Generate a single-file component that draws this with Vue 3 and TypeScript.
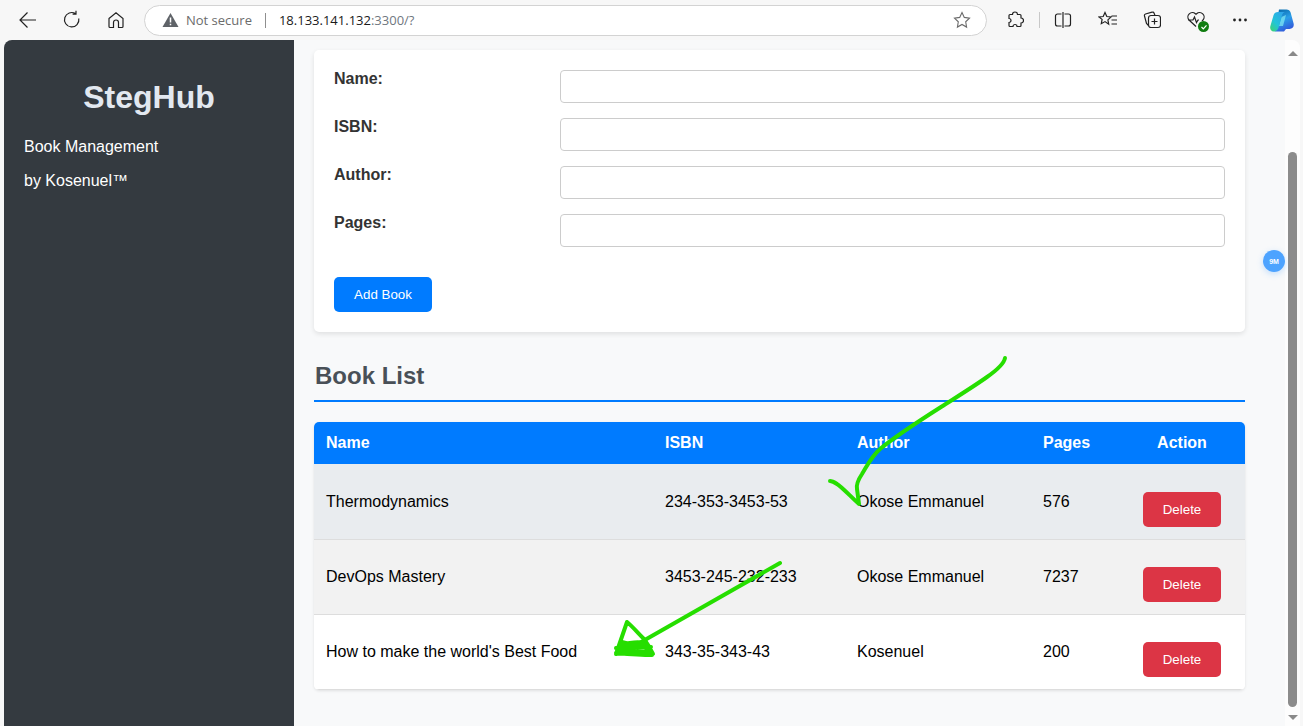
<script setup lang="ts">
interface Book {
  name: string;
  isbn: string;
  author: string;
  pages: number;
}

const fields = ['Name:', 'ISBN:', 'Author:', 'Pages:'];

const books: Book[] = [
  { name: 'Thermodynamics', isbn: '234-353-3453-53', author: 'Okose Emmanuel', pages: 576 },
  { name: 'DevOps Mastery', isbn: '3453-245-232-233', author: 'Okose Emmanuel', pages: 7237 },
  { name: "How to make the world's Best Food", isbn: '343-35-343-43', author: 'Kosenuel', pages: 200 },
];
</script>

<template>
  <div class="browser">
    <header class="toolbar">
      <svg class="tool back" width="20" height="20" viewBox="0 0 20 20"><path d="M18 10H2M9.5 2.500 2 10l7.5 7.500" /></svg>
      <svg class="tool reload" width="20" height="20" viewBox="0 0 20 20"><path d="M16.800 8.500A7.200 7.200 0 1 1 13.500 3.600M14 .8v3.400h-3.400" /></svg>
      <svg class="tool home" width="20" height="20" viewBox="0 0 20 20"><path d="M3 8.500 10 2.800l7 5.700v8a1 1 0 0 1-1 1h-3.500v-5a2.500 2.500 0 0 0-5 0v5H4a1 1 0 0 1-1-1z" /></svg>

      <div class="address">
        <svg width="17" height="16" viewBox="0 0 17 16"><path d="M8.500 1 16.500 15H.5z" fill="#5f6368" /><path d="M8.500 5.500v5M8.500 11.700v1.600" stroke="#fff" stroke-width="1.500" /></svg>
        <span class="insecure">Not secure</span>
        <span class="divider"></span>
        <span class="url">18.133.141.132<span class="url-rest">:3300/?</span></span>
        <svg class="star" width="18" height="18" viewBox="0 0 18 18"><path d="m9 1.500 2.300 4.900 5.200.7-3.800 3.700.9 5.300L9 13.500l-4.600 2.600.9-5.300L1.500 7.100l5.200-.7z" /></svg>
      </div>

      <svg class="tool ext" width="18" height="18" viewBox="0 0 18 18"><path d="M6.500 3.500a2.500 2.500 0 0 1 5 0h2.500a1 1 0 0 1 1 1V7a2.500 2.500 0 0 1 0 5v2.500a1 1 0 0 1-1 1h-3a2 2 0 0 0-4 0H4a1 1 0 0 1-1-1v-3a2 2 0 0 0 0-4v-3a1 1 0 0 1 1-1z" /></svg>
      <span class="tool-sep"></span>
      <svg class="tool split" width="18" height="18" viewBox="0 0 18 18"><path d="M7.500 3H3.500a2 2 0 0 0-2 2v8a2 2 0 0 0 2 2h4M10.500 3h4a2 2 0 0 1 2 2v8a2 2 0 0 1-2 2h-4M9 1v16" /></svg>
      <svg class="tool favs" width="20" height="18" viewBox="0 0 20 18"><path d="m7 1.500 1.800 4 4.200.5-3.100 2.900.8 4.300L7 10.600l-3.700 2.100.8-4.300L1 6l4.200-.5zM13.500 5H19M13.500 9H19M13.500 13H19" /></svg>
      <svg class="tool coll" width="18" height="18" viewBox="0 0 18 18"><rect x="5.500" y="4.500" width="12" height="12" rx="2.500" /><path d="M11.500 7.500v6M8.500 10.500h6M12 4.500 11 2a1.500 1.500 0 0 0-2-.8L2.500 3a1.500 1.500 0 0 0-1 2l2 7.500 2 2" /></svg>
      <div class="health">
        <svg class="tool" width="20" height="18" viewBox="0 0 20 18"><path d="M10 15.500 3 9a4.500 4.500 0 0 1 6.400-6.300l.6.600.6-.6A4.500 4.500 0 0 1 17 9l-1 1M2 9h5l1.500-3 2 5.500L12 9h1" /></svg>
        <span class="health-dot"><svg width="8" height="8" viewBox="0 0 8 8"><path d="m1.500 4 1.800 1.800 3.200-3.500" /></svg></span>
      </div>
      <svg class="dots" width="14" height="4" viewBox="0 0 14 4"><circle cx="1.500" cy="2" r="1.400" /><circle cx="7" cy="2" r="1.400" /><circle cx="12.500" cy="2" r="1.400" /></svg>
      <svg class="copilot" width="24" height="23" viewBox="0 0 24 23">
        <defs>
          <linearGradient id="cop1" x1="0.3" y1="0" x2="0.7" y2="1"><stop offset="0" stop-color="#0b6fb0" /><stop offset=".45" stop-color="#2a9fe8" /><stop offset="1" stop-color="#3350d8" /></linearGradient>
          <linearGradient id="cop2" x1="0" y1="1" x2="0.8" y2="0"><stop offset="0" stop-color="#3fd46a" /><stop offset=".45" stop-color="#22c4d8" /><stop offset="1" stop-color="#2fa4ea" /></linearGradient>
        </defs>
        <path d="M9 .5h7.500c2 0 3.500 1.300 4.100 3l3 11c.8 3-1.100 5.500-4.100 5.500H16l-2 2.500H5z" fill="url(#cop1)" />
        <path d="M11.500 8 16 6l-3 11H9z" fill="#7fe6f2" opacity=".75" />
        <path d="M8 3h7c-2.500.5-3 3-3.500 5L9 17c-.7 3-2.200 5.500-5.200 5.500C1 22.500-.4 19.800.4 17L3.600 6C4.200 4 5.800 3 8 3z" fill="url(#cop2)" />
      </svg>
    </header>

    <div class="viewport">
      <aside class="sidebar">
        <h1>StegHub</h1>
        <p>Book Management</p>
        <p>by Kosenuel™</p>
      </aside>

      <main class="content">
        <form class="card" @submit.prevent>
          <div v-for="field in fields" :key="field" class="form-row">
            <label>{{ field }}</label>
            <input type="text" />
          </div>
          <button class="add-btn" type="button">Add Book</button>
        </form>

        <h2>Book List</h2>

        <div class="table-wrap">
          <table>
            <colgroup>
              <col style="width: 339px" />
              <col style="width: 192px" />
              <col style="width: 186px" />
              <col style="width: 88px" />
              <col style="width: 126px" />
            </colgroup>
            <thead>
              <tr>
                <th>Name</th>
                <th>ISBN</th>
                <th>Author</th>
                <th>Pages</th>
                <th class="center">Action</th>
              </tr>
            </thead>
            <tbody>
              <tr v-for="book in books" :key="book.isbn">
                <td>{{ book.name }}</td>
                <td>{{ book.isbn }}</td>
                <td>{{ book.author }}</td>
                <td>{{ book.pages }}</td>
                <td class="center"><button class="delete-btn" type="button">Delete</button></td>
              </tr>
            </tbody>
          </table>
        </div>
      </main>

      <div class="scrollbar">
        <span class="arrow up"></span>
        <span class="thumb"></span>
        <span class="arrow down"></span>
      </div>

      <!-- floating badge and the hand drawn marks sit on top of the page -->
      <span class="badge">9M</span>
      <svg class="scribble" width="1303" height="686" viewBox="0 40 1303 686">
        <path d="M1005 358c-1 6-8 12-18 19-14 10-32 21-46 30-22 14-44 28-61 42-9 8-13 17-18 25-4 6-6 10-5 15l2 15c-8-7-17-17-22-20-3-2-5-3-7-3" />
        <path d="M780 563 636 645" />
        <path d="M627 622 616 654M627 622c4 3 12 12 17 17 3 4 7 11 9 15M616 648c10-2 24-3 35-1M616 654c12-3 26-4 36-1M618 651c10-3 20-6 30-3M620 645c8-2 16-4 24-2M622 642 640 647M616 653c12 1 24 2 36 2" />
      </svg>
    </div>
  </div>
</template>

<style>
html,
body {
  margin: 0;
  overflow: hidden;
}
</style>

<style scoped>
.browser {
  width: 1303px;
  height: 726px;
  overflow: hidden;
  display: flex;
  flex-direction: column;
  background: #f7f7f7;
  font-family: "Liberation Sans", Arial, sans-serif;
}

.toolbar {
  height: 40px;
  flex: none;
  box-sizing: border-box;
  display: flex;
  align-items: center;
  padding: 0 0 0 18px;
}

.tool {
  flex: none;
  fill: none;
  stroke: #222;
  stroke-width: 1.2;
}

.reload {
  margin-left: 24px;
}

.home {
  margin-left: 24px;
}

.address {
  width: 843px;
  height: 31px;
  flex: none;
  box-sizing: border-box;
  margin-left: 18px;
  display: flex;
  align-items: center;
  padding: 0 15px 0 17px;
  background: #fff;
  border: 1px solid #d3d3d3;
  border-radius: 16px;
  font-family: "Open Sans", "Noto Sans", sans-serif;
  font-size: 13px;
}

.insecure {
  margin-left: 7px;
  color: #6b6b6b;
}

.divider {
  width: 1px;
  height: 15px;
  margin: 0 13px 0 13px;
  background: #8f8f8f;
}

.url {
  color: #1a1a1a;
}

.url-rest {
  color: #6f7780;
}

.star {
  margin-left: auto;
  fill: none;
  stroke: #6b6b6b;
  stroke-width: 1.1;
}

.ext {
  margin-left: 19px;
}

.tool-sep {
  width: 1px;
  height: 16px;
  margin: 0 14px 0 15px;
  background: #c8c8c8;
}

.favs {
  margin-left: 26px;
}

.coll {
  margin-left: 25px;
}

.health {
  position: relative;
  display: flex;
  margin-left: 25px;
}

.health-dot {
  position: absolute;
  right: -3px;
  bottom: -3px;
  width: 11px;
  height: 11px;
  display: flex;
  align-items: center;
  justify-content: center;
  background: #107c10;
  border-radius: 50%;
}

.health-dot path {
  fill: none;
  stroke: #fff;
  stroke-width: 1.2;
}

.dots {
  margin-left: 27px;
  flex: none;
  fill: #222;
}

.copilot {
  margin-left: 23px;
  flex: none;
}

.viewport {
  position: relative;
  flex: 1;
  min-height: 0;
  margin: 0 3px 0 4px;
  display: flex;
  overflow: hidden;
  background: #f8f9fa;
  border-top-left-radius: 8px;
  border-top-right-radius: 8px;
}

.sidebar {
  width: 290px;
  flex: none;
  box-sizing: border-box;
  padding: 39px 20px 0;
  background: #343a40;
  color: #fff;
}

.sidebar h1 {
  margin: 0 0 14px;
  font-size: 32px;
  line-height: 37px;
  font-weight: 700;
  text-align: center;
  color: #e2e8f0;
}

.sidebar p {
  margin: 0;
  font-size: 16px;
  line-height: 34px;
}

.content {
  flex: 1;
  min-width: 0;
  padding: 10px 40px 0 20px;
  color: #000;
}

.card {
  height: 282px;
  box-sizing: border-box;
  padding: 20px;
  background: #fff;
  border-radius: 5px;
  box-shadow: 0 2px 5px rgba(0, 0, 0, 0.1);
}

.form-row {
  display: flex;
  align-items: flex-start;
  margin-bottom: 15px;
}

.form-row label {
  width: 226px;
  flex: none;
  font-size: 16px;
  line-height: 18px;
  font-weight: 700;
  color: #333;
}

.form-row input {
  flex: 1;
  min-width: 0;
  height: 33px;
  box-sizing: border-box;
  background: #fff;
  border: 1px solid #ccc;
  border-radius: 4px;
}

.add-btn {
  display: block;
  width: 98px;
  height: 35px;
  margin-top: 30px;
  padding: 0;
  background: #007bff;
  color: #fff;
  border: none;
  border-radius: 5px;
  font-family: inherit;
  font-size: 13.333px;
}

h2 {
  margin: 30px 0 20px;
  padding: 0 0 10px 1px;
  height: 28px;
  border-bottom: 2px solid #007bff;
  font-size: 24px;
  line-height: 28px;
  font-weight: 700;
  color: #495057;
}

.table-wrap {
  border-radius: 5px;
  overflow: hidden;
  box-shadow: 0 1px 3px rgba(0, 0, 0, 0.1);
}

table {
  width: 931px;
  table-layout: fixed;
  border-collapse: collapse;
  background: #fff;
  font-size: 16px;
  line-height: 18px;
}

th {
  height: 42px;
  padding: 0 12px;
  box-sizing: border-box;
  background: #007bff;
  color: #fff;
  font-weight: 700;
  text-align: left;
}

td {
  height: 75px;
  padding: 0 12px;
  box-sizing: border-box;
  border-bottom: 1px solid #ddd;
}

tbody tr:nth-child(1) {
  background: #e9ecef;
}

tbody tr:nth-child(1) td {
  padding-top: 1px;
}

tbody tr:nth-child(2) {
  background: #f2f2f2;
}

.center {
  text-align: center;
}

.delete-btn {
  width: 78px;
  height: 35px;
  margin-top: 16px;
  padding: 0;
  background: #dc3545;
  color: #fff;
  border: none;
  border-radius: 5px;
  font-family: inherit;
  font-size: 13.333px;
}

.scrollbar {
  width: 15px;
  flex: none;
  display: flex;
  flex-direction: column;
  align-items: center;
  background: #fdfdfd;
}

.arrow {
  border-left: 5px solid transparent;
  border-right: 5px solid transparent;
}

.arrow.up {
  margin-top: 11px;
  border-bottom: 5px solid #8a8a8a;
}

.arrow.down {
  margin-top: 8px;
  border-top: 5px solid #8a8a8a;
}

.thumb {
  width: 9px;
  height: 555px;
  margin-top: 96px;
  background: #8c8c8c;
  border-radius: 5px;
}

.badge {
  position: absolute;
  left: 1259px;
  top: 210px;
  width: 22px;
  height: 22px;
  display: flex;
  align-items: center;
  justify-content: center;
  background: #4da3ff;
  border-radius: 50%;
  box-shadow: 0 2px 6px rgba(77, 163, 255, 0.3);
  color: #fff;
  font-size: 7px;
  font-weight: 700;
}

.scribble {
  position: absolute;
  left: -4px;
  top: 0;
  pointer-events: none;
}

.scribble path {
  fill: none;
  stroke: #26de00;
  stroke-width: 4;
  stroke-linecap: round;
  stroke-linejoin: round;
}
</style>
